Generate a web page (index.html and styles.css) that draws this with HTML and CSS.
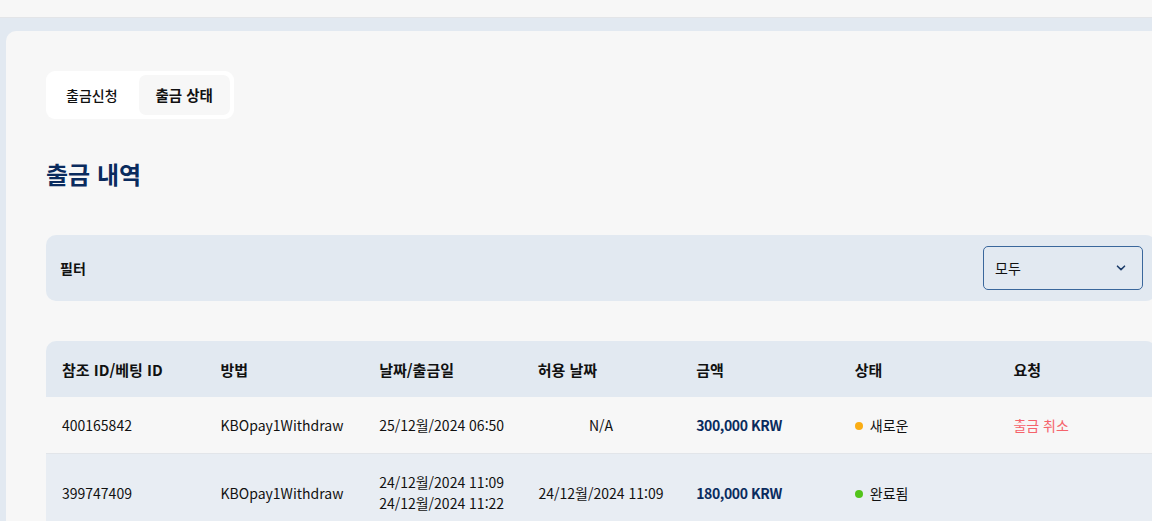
FILE: index.html
```html
<!DOCTYPE html>
<html lang="ko">
<head>
	<meta charset="UTF-8">
	<title>출금 내역</title>
	<link rel="stylesheet" href="styles.css">
</head>
<body>
	<div class="topbar"></div>
	<div class="shell">
		<div class="card">
			<div class="tabs">
				<span class="tab">출금신청</span>
				<span class="tab active">출금 상태</span>
			</div>

			<h1 class="title">출금 내역</h1>

			<div class="filter">
				<span class="filter-label">필터</span>
				<div class="select">
					<span>모두</span>
					<svg width="10" height="6" viewBox="0 0 10 6"><path d="M1.5 1.2 5 4.6 8.5 1.2" fill="none" stroke="#1d3d6b" stroke-width="1.6" stroke-linecap="round" stroke-linejoin="round"/></svg>
				</div>
			</div>

			<table class="list">
				<thead>
					<tr>
						<th>참조 ID/베팅 ID</th>
						<th>방법</th>
						<th>날짜/출금일</th>
						<th>허용 날짜</th>
						<th>금액</th>
						<th>상태</th>
						<th>요청</th>
					</tr>
				</thead>
				<tbody>
					<tr>
						<td>400165842</td>
						<td>KBOpay1Withdraw</td>
						<td>25/12월/2024 06:50</td>
						<td class="center">N/A</td>
						<td class="amount">300,000 KRW</td>
						<td><span class="status"><i class="dot new"></i>새로운</span></td>
						<td><span class="cancel">출금 취소</span></td>
					</tr>
					<tr class="alt">
						<td>399747409</td>
						<td>KBOpay1Withdraw</td>
						<td>24/12월/2024 11:09<br>24/12월/2024 11:22</td>
						<td class="center">24/12월/2024 11:09</td>
						<td class="amount">180,000 KRW</td>
						<td><span class="status"><i class="dot done"></i>완료됨</span></td>
						<td></td>
					</tr>
				</tbody>
			</table>
		</div>
	</div>
</body>
</html>
```

FILE: styles.css
```css
*{margin:0;padding:0;box-sizing:border-box;}
html,body{height:100%;}
body{
	font-family:"Noto Sans CJK KR","Noto Sans",sans-serif;
	font-size:14px;
	color:#111;
	background:#e2e9f1;
	overflow:hidden;
}
.topbar{
	height:18px;
	background:#f7f7f7;
	border-bottom:1px solid #e3e5e8;
}
.shell{
	padding:13px 0 0 6px;
	min-height:calc(100% - 18px);
}
.card{
	background:#f7f7f7;
	border-radius:10px 0 0 0;
	padding:40px 0 60px 40px;
	min-height:600px;
	width:1180px;
}
.tabs{
	display:inline-flex;
	gap:5px;
	background:#fff;
	border-radius:9px;
	padding:4px;
}
.tab{
	height:40px;
	line-height:40px;
	padding:0 16px;
	border-radius:7px;
	font-weight:500;
}
.tab.active{
	background:#f7f7f7;
	font-weight:700;
	font-size:14.5px;
	padding:0 17px;
}
.title{
	margin-top:37px;
	font-size:24px;
	line-height:36px;
	font-weight:700;
	color:#0a2b5e;
}
.filter{
	margin-top:43px;
	width:1110px;
	height:66px;
	background:#e2e9f1;
	border-radius:10px;
	display:flex;
	align-items:center;
	justify-content:space-between;
	padding:0 13px 0 14px;
}
.filter-label{font-weight:700;}
.select{
	width:160px;
	height:44px;
	border:1px solid #3a679c;
	border-radius:5px;
	display:flex;
	align-items:center;
	justify-content:space-between;
	padding:0 16px 0 11px;
}
.list{
	margin-top:40px;
	width:1110px;
	border-collapse:separate;
	border-spacing:0;
	table-layout:fixed;
}
.list th,.list td{
	text-align:left;
	padding:0 16px;
	vertical-align:middle;
}
.list th{
	height:56px;
	background:#e2e9f1;
	font-weight:700;
	font-size:15px;
}
.list th:first-child{border-top-left-radius:10px;}
.list th:last-child{border-top-right-radius:10px;}
.list td{
	height:57px;
	background:#f7f7f7;
	border-bottom:1px solid #e2e5e9;
	line-height:21px;
}
.list tr.alt td{
	height:78px;
	background:#e8edf3;
	border-bottom:none;
}
.list td.center{text-align:center;}
.amount{
	font-weight:700;
	letter-spacing:-0.4px;
	color:#0a2b5e;
}
.status{
	display:inline-flex;
	align-items:center;
	gap:7px;
}
.dot{
	width:8px;
	height:8px;
	border-radius:50%;
	display:inline-block;
}
.dot.new{background:#faad14;}
.dot.done{background:#52c41a;}
.cancel{color:#f5636b;}
```
